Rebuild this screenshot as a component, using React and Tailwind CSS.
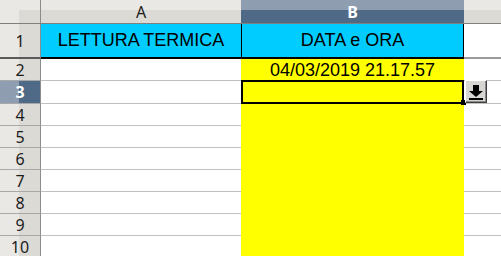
import React from "react";

function RowHeader({ n, h, selected, thick }) {
  return (
    <div
      className={`w-[41px] shrink-0 flex border-r border-r-[#8c8c8c] ${
        thick ? "border-b-2 border-b-[#5a5a5a]" : "border-b border-b-[#a8a8a8]"
      } ${selected ? "bg-[linear-gradient(to_right,#8e9eb0_19px,#4f6a86_19px)]" : "bg-[linear-gradient(to_right,#e9e8e5_19px,#dcdad5_19px)]"}`}
      style={{ height: h }}
    >
      <div
        className={`flex-1 flex items-center justify-center text-[16px] leading-none ${
          selected ? "text-white font-bold" : "text-[#1c1c1c]"
        }`}
        style={{ fontFamily: '"Noto Sans", "DejaVu Sans", sans-serif' }}
      >
        {n}
      </div>
    </div>
  );
}

export default function App() {
  const rows = [
    { n: 2, h: 22, text: "04/03/2019 21.17.57" },
    { n: 3, h: 23, selected: true },
    { n: 4, h: 22 },
    { n: 5, h: 22 },
    { n: 6, h: 22 },
    { n: 7, h: 22 },
    { n: 8, h: 22 },
    { n: 9, h: 22 },
    { n: 10, h: 22 },
  ];
  const cellFont = { fontFamily: '"Liberation Sans", Arial, sans-serif' };
  const uiFont = { fontFamily: '"Noto Sans", "DejaVu Sans", sans-serif' };
  return (
    <div className="relative w-[501px] h-[256px] overflow-hidden bg-white">
      {/* Column header row */}
      <div className="flex h-[24px] border-b border-b-[#7f7f7f]">
        <div className="w-[41px] shrink-0 border-r border-r-[#8c8c8c] bg-[#e9e8e5] pt-[10px] pl-[19px]">
          <div className="w-full h-full bg-[#dcdad5]" />
        </div>
        <div
          className="w-[200px] shrink-0 flex items-center justify-center text-[16px] leading-none text-[#1c1c1c] bg-[linear-gradient(to_bottom,#e9e8e5_10px,#dcdad5_10px)]"
          style={uiFont}
        >
          A
        </div>
        <div
          className="w-[223px] shrink-0 flex items-center justify-center text-[16px] leading-none font-bold text-white bg-[linear-gradient(to_bottom,#8e9eb0_10px,#4f6a86_10px)]"
          style={uiFont}
        >
          B
        </div>
        <div className="flex-1 bg-[linear-gradient(to_bottom,#e9e8e5_10px,#dcdad5_10px)]" />
      </div>

      {/* Row 1 */}
      <div className="flex h-[35px]">
        <RowHeader n={1} h={35} thick />
        <div
          className="w-[200px] shrink-0 bg-[#00ccff] border-b-2 border-b-black flex items-center justify-center text-[18px] text-black"
          style={cellFont}
        >
          LETTURA TERMICA
        </div>
        <div
          className="w-[223px] shrink-0 bg-[#00ccff] border-b-2 border-b-black border-l border-l-black border-r border-r-black flex items-center justify-center text-[18px] text-black"
          style={cellFont}
        >
          DATA e ORA
        </div>
        <div className="flex-1 border-b-2 border-b-[#9a9a9a]" />
      </div>

      {rows.map((r) => (
        <div key={r.n} className="flex" style={{ height: r.h }}>
          <RowHeader n={r.n} h={r.h} selected={r.selected} />
          <div className="w-[200px] shrink-0 border-b border-b-[#c0c0c0]" />
          <div
            className="w-[223px] shrink-0 bg-[#ffff00] flex items-center justify-center text-[18px] text-black"
            style={cellFont}
          >
            {r.text || ""}
          </div>
          <div className="flex-1 border-b border-b-[#c0c0c0]" />
        </div>
      ))}

      {/* Selection outline on B3 */}
      <div className="absolute left-[241px] top-[80px] w-[223px] h-[24px] border-2 border-black" />
      <div className="absolute left-[461px] top-[100px] w-[5px] h-[5px] bg-black" />

      {/* Dropdown button */}
      <div className="absolute left-[465px] top-[80px] w-[22px] h-[23px] bg-[#d8d6d2] border border-t-white border-l-white border-r-[#404040] border-b-[#404040] shadow-[inset_-1px_-1px_0_#8a8a8a]">
        <svg width="20" height="21" viewBox="0 0 20 21" className="block">
          <rect x="7" y="4" width="6" height="6" fill="#000" />
          <polygon points="3,10 17,10 10,16" fill="#000" />
          <rect x="3" y="17" width="14" height="2" fill="#000" />
        </svg>
      </div>
    </div>
  );
}
